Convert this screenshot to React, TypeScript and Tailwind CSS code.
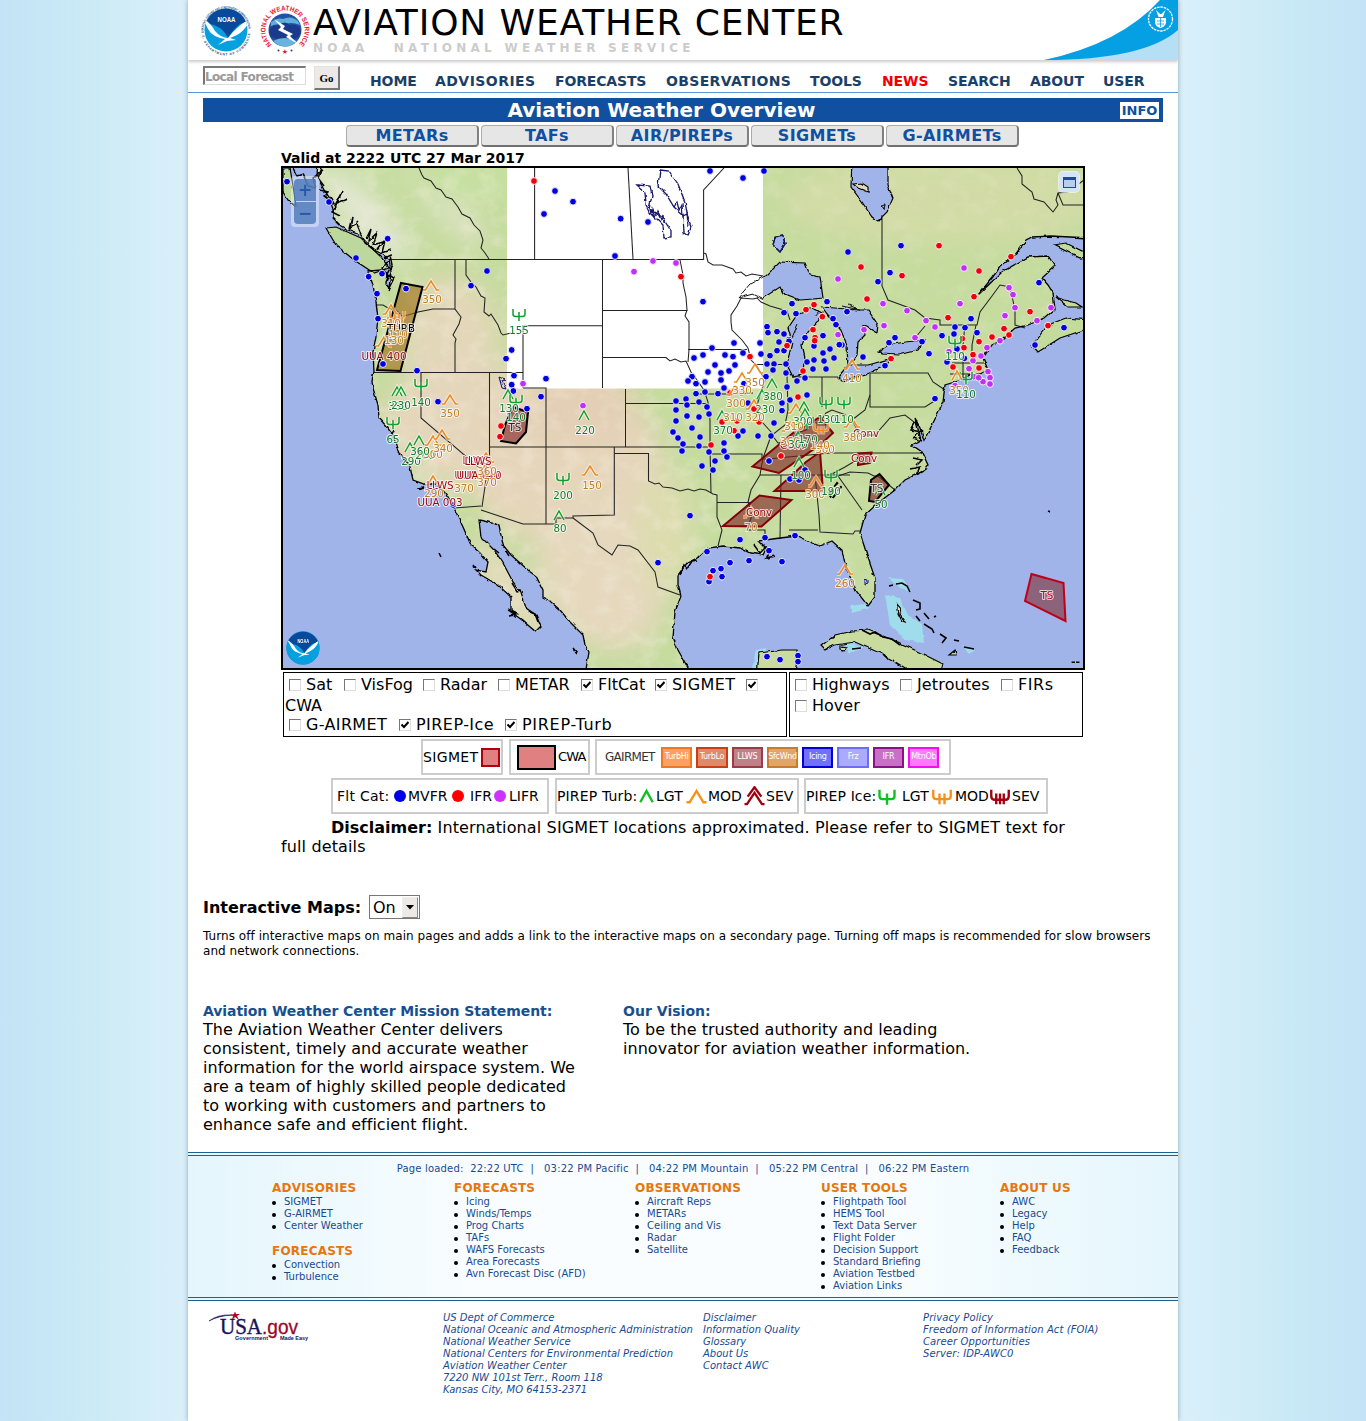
import React from "react";

type Pt = [number, number];
type Tile = { ox: number; oy: number; blue?: string; red?: string; purple?: string };

// Station dots, grouped by map sector; coordinates are thirds of a pixel from the sector origin.
const sectors: Tile[] = [
  {
    ox: 281, oy: 165,
    blue: "18,50 144,111 320,221 225,279 303,326 263,335 375,371 288,386 291,461 306,597 408,617 471,710 618,318 570,362 692,555 675,581 699,632 692,659 697,678 738,731 780,695 795,641",
    red: "759,48",
    purple: "726,656",
  },
  {
    ox: 550, oy: 165,
    blue: "15,78 69,110 -18,147 212,161 294,171 195,273 459,410 480,18 579,39 642,18 726,416 702,443 738,446 651,485 654,503 681,500 702,507 717,524 687,530 765,518",
    red: "393,335 768,434 792,419 789,494 795,518",
    purple: "252,320 309,288 378,294 99,722",
  },
  {
    ox: 815, oy: 165,
    blue: "99,261 258,242 225,323 189,350 36,410 54,461 63,479 24,512 96,440 240,518 222,533 321,530 381,512 342,566 210,602 144,576 81,540 420,486 450,488 468,461 417,507 486,503 426,552 396,591 448,580 360,701 672,353 747,488 660,540",
    red: "138,306 261,332 372,242 588,275 492,318 477,395 156,402 22,455 399,458 228,581 442,521 492,530 447,548 474,569 414,606 492,609 531,516 567,491 582,510 645,440 699,482",
    purple: "69,342 447,309 204,416 276,437 435,416 333,467 360,486 207,482 147,494 69,509 300,518 402,560 462,611 476,635 420,662 474,587 498,573 516,548 555,527 570,452 600,428 594,389 582,368 708,428 666,467 519,620 525,638 504,650 525,657 491,638",
  },
  { ox: 281, oy: 415, blue: "516,270", red: "660,33 657,65" },
  {
    ox: 550, oy: 415,
    blue: "324,443 471,410 570,374 645,368 735,362 657,407 597,437 696,440 540,443 513,461 489,467 516,485 477,500 651,725 690,734 744,722 744,740",
    red: "480,485",
  },
  {
    ox: 660, oy: 340,
    blue: "222,9 300,9 357,6 387,4 156,24 129,45 102,54 195,45 219,50 249,39 303,42 330,47 351,32 372,32 165,75 225,75 321,72 342,72 378,72 144,96 183,99 207,93 339,90 378,99 96,110 84,123 183,120 318,110 108,131 135,126 252,131 381,141 411,123 435,114 441,66 462,60 459,87 492,63 498,87 522,54 489,39 510,27 462,18 538,14 192,144 108,161 135,156 174,161 48,183 78,177 81,195 117,186 141,201 48,210 147,222 48,243 81,228 117,231 96,264 39,276 54,294 69,312 66,333 120,291 117,318 147,336 192,309 192,333 201,351 165,363 126,378 159,390 249,273 234,288 294,288 333,288 342,249 366,189 366,212 390,180 441,165 264,189 327,363 435,390 390,417 417,420 90,527",
    red: "381,17 270,50 464,2 429,93 414,171 210,159 282,207 186,246 231,243 297,246 222,272 153,315 363,348",
  },
];

const parse = (s?: string): Pt[] => (s ? s.split(" ").map((p) => p.split(",").map(Number) as Pt) : []);

function Dots({ t }: { t: Tile }) {
  const draw = (s: string | undefined, fill: string) =>
    parse(s).map(([x, y], i) => (
      <circle key={fill + i} cx={t.ox + x / 3} cy={t.oy + y / 3} r={3.4} fill={fill} stroke="#fff" strokeWidth={0.9} />
    ));
  return (
    <g>
      {draw(t.blue, "#0000e0")}
      {draw(t.purple, "#c030f8")}
      {draw(t.red, "#f00008")}
    </g>
  );
}

const glyphs: Record<string, string> = {
  lgt: "M-5 5L0-4L5 5",
  mod: "M-8 5H-5.500L0-4L5.500 5H8",
  sev: "M-8 6.500H-6L0-2.500L6 6.500H8M-5.500 .5L0-7L5.500 .5",
  ice: "M-6-5V0Q-6 2.500-3.500 2.500H3.500Q6 2.500 6 0V-5M0-2V7",
  icemod: "M-7-5V0Q-7 2.500-4.500 2.500H4.500Q7 2.500 7 0V-5M-2-2V6.500M2-2V6.500",
  icesev: "M-7-5V0Q-7 3-4.500 3H4.500Q7 3 7 0V-5M-3-2V6.500M0-2V6.500M3-2V6.500",
};

function Glyph({ x, y, k, c }: { x: number; y: number; k: string; c: string }) {
  return (
    <g transform={`translate(${x} ${y})`} fill="none">
      <path d={glyphs[k]} stroke="#fff" strokeOpacity={0.6} strokeWidth={3.4} />
      <path d={glyphs[k]} stroke={c} strokeWidth={1.5} />
    </g>
  );
}

const G = "#12a02c";
const O = "#f08820";
const reports: [number, number, string, string][] = [
  [431, 285, "mod", O], [519, 314, "ice", G], [391, 309, "mod", O], [397, 316, "icemod", O], [395, 322, "icemod", O],
  [384, 341, "mod", O], [397, 391, "lgt", G], [401, 391, "lgt", G], [421, 384, "ice", G], [450, 399, "mod", O],
  [393, 422, "ice", G], [410, 447, "lgt", G], [419, 440, "lgt", G], [433, 440, "mod", O], [442, 434, "mod", O],
  [433, 480, "mod", O], [486, 457, "mod", O], [487, 466, "mod", O], [508, 394, "lgt", G], [516, 400, "ice", G],
  [584, 415, "lgt", G], [563, 478, "ice", G], [590, 470, "mod", O], [559, 515, "lgt", G], [755, 368, "mod", O],
  [742, 377, "mod", O], [772, 383, "lgt", G], [762, 394, "lgt", G], [735, 390, "mod", O], [754, 404, "mod", O],
  [722, 415, "lgt", G], [796, 408, "mod", O], [804, 406, "lgt", G], [805, 413, "lgt", G], [826, 402, "ice", G],
  [844, 402, "ice", G], [807, 422, "ice", G], [821, 428, "icemod", O], [790, 426, "mod", O], [798, 436, "lgt", G],
  [852, 364, "mod", O], [852, 422, "mod", O], [799, 462, "lgt", G], [816, 481, "mod", O], [831, 475, "ice", G],
  [880, 490, "lgt", G], [751, 512, "mod", O], [845, 569, "mod", O], [955, 341, "ice", G], [966, 377, "ice", G],
  [957, 375, "lgt", O],
];

const TG = "#147a2c";
const TO = "#c07c22";
const TR = "#9a0010";
const labels: [number, number, string, string][] = [
  [432, 303, "350", TO], [519, 334, "155", TG], [391, 327, "310", TO], [401, 332, "TURB", "#000"], [398, 338, "110", TO],
  [394, 344, "130", TO], [384, 360, "UUA 400", TR], [398, 410, "330", TG], [401, 409, "230", TG], [421, 406, "140", TG],
  [450, 417, "350", TO], [393, 443, "65", TG], [411, 465, "290", TG], [425, 459, "200", TG], [433, 458, "300", TO],
  [420, 455, "360", TG], [443, 452, "340", TO], [476, 464, "LLWS", TR], [478, 465, "LLWS", TR], [477, 479, "UUA 040", TR],
  [479, 479, "UUA 010", TR], [487, 475, "360", TO], [487, 486, "370", TO], [464, 492, "370", TO], [440, 489, "LLWS", TR],
  [434, 497, "290", TO], [440, 506, "UUA 003", TR], [509, 412, "130", TG], [516, 421, "140", TG], [515, 431, "TS", "#222"],
  [585, 434, "220", TG], [563, 499, "200", TG], [592, 489, "150", TO], [560, 532, "80", TG], [755, 386, "350", TO],
  [742, 394, "330", TO], [773, 400, "380", TG], [736, 407, "300", TO], [765, 413, "230", TG], [733, 421, "310", TO],
  [755, 421, "320", TO], [723, 434, "370", TG], [803, 425, "300", TG], [794, 430, "310", TO], [827, 423, "130", TG],
  [844, 423, "110", TG], [852, 382, "410", TO], [866, 437, "Conv", TR], [853, 441, "380", TO], [864, 462, "Conv", TR],
  [793, 449, "Conv", TR], [825, 453, "300", TO], [790, 445, "360", TO], [798, 448, "300", TG], [808, 443, "170", TG],
  [820, 449, "140", TO], [801, 479, "100", TG], [815, 498, "300", TO], [831, 495, "190", TG], [877, 492, "TS", "#333"],
  [881, 508, "50", TG], [759, 516, "Conv", TR], [751, 531, "70", TO], [845, 587, "260", TO], [955, 360, "110", TG],
  [959, 394, "350", TO], [966, 398, "110", TG], [1047, 599, "TS", "#c00018"],
];

const mainland =
  "318,160 317,176 324,190 329,197 333,208 333,218 341,226 348,230 361,235 365,243 374,250 382,254 389,259 391,272 389,288 386,284 387,273 381,270 368,271 373,285 376,302 378,318 376,336 373,352 374,372 372,380 373,388 378,405 379,418 386,426 393,435 398,452 404,458 410,467 413,480 424,484 437,484 445,493 454,508 463,527 471,545 480,553 488,562 486,572 476,570 481,575 498,585 511,597 511,612 522,620 536,632 541,627 536,615 526,608 521,592 513,582 503,563 494,550 481,537 479,520 484,521 499,525 503,545 511,555 528,570 536,576 543,590 543,598 551,602 560,610 570,622 583,635 585,645 589,652 585,675 694,675 688,668 678,650 673,637 675,612 681,596 678,585 678,575 687,563 697,558 708,548 723,546 740,548 750,553 763,555 766,549 758,541 780,538 797,536 812,543 820,546 832,541 842,550 846,568 857,592 868,606 875,597 875,578 867,555 860,533 865,515 878,503 895,490 905,480 925,470 928,465 922,452 912,445 921,440 915,418 920,428 924,440 932,425 937,415 943,402 945,385 958,381 970,375 980,374 988,370 983,358 992,345 1002,340 1015,328 1028,325 1045,318 1055,309 1053,293 1048,285 1042,278 1055,266 1048,256 1028,257 1002,272 978,295 992,278 1000,267 1015,255 1026,240 1032,237 1050,236 1090,238 1090,160";

const water: string[] = [
  "852,160 851,187 862,202 872,217 878,221 887,212 893,198 888,185 888,160",
  "738,298 750,282 767,275 780,262 805,263 810,275 820,277 823,298 813,299 800,300 783,293 780,287 763,298 753,297",
  "813,308 797,315 788,328 792,342 787,365 793,377 802,375 805,358 802,345 807,332 817,322 822,313",
  "822,307 835,308 858,310 868,310 878,325 877,333 863,325 865,335 858,342 857,355 848,368 847,345 840,328 828,315",
  "838,377 848,365 868,365 890,359 887,365 865,375 842,381",
  "878,352 888,345 905,342 925,340 918,350 898,355 882,354",
  "773,245 775,237 783,236 785,244 780,252",
];

const borders: string[] = [
  "389,259.500 703.600,259.500 703.600,190 724,168", "534.600,168 534.600,259", "628,168 633,259",
  "419,168 422,175 424,178 431,181 436,188 441,190 446,197 452,199 458,207 462,214 470,218 474,225 480,231 483,240 481,248 485,253 489,259",
  "455,259 455,309 461,317 459,324 453,335 456,339 455,343 455,372", "376,305 383,305 388,308 396,310 402,316 408,315 418,312 433,309 455,309", "374,372.500 523,372.500",
  "466,260 466,275 471,282 476,287 481,296 485,298 484,312 489,316 491,314 498,325 501,333 503,335 511,333", "523,388 523,325.700 602.500,325.700", "523,388 546,388 546,524",
  "602.500,260 602.500,388", "602.500,310.500 687.500,310.500", "602.500,357.500 666,357.500 670,361 675,359 681,362 686,361 691,372 697,380 704,390 708,402 710,420 710,447 711,493",
  "680,260 683,275 683,283 686,297 687,310 685,316 689,322 689,350 688,362", "688,349.500 747,349.500",
  "703.600,253 706,254 708,262 713,265 722,265 733,269 736,273 741,272 746,276 752,274 763,276", "753,299 741,298 737,306 731,315 731,322 732,330 742,340 748,348 751,360 757,366 765,380 760,395 757,405 760,419 763,423 772,433 766,450 763,458 760,475 751,490 748,502 752,515 747,530",
  "753,299 757,298 761,302 770,306 787,311 790,320", "755,364.500 788,364.500", "696,394 728,394 753,393", "625.500,389 625.500,447", "625.500,403.500 708,403.500",
  "421,372 421,418 482,470 486,480 483,500 482,507", "489.500,372 489.500,455 485,473", "489.500,447 710,447", "614.300,447 614.300,515 573,516 573,518 556,518 556,524 523,524 481,510",
  "454,508 481,506", "614.300,453.500 648.500,453.500 648.500,481 655,484 659,483 663,487 672,488 680,491 688,489 694,491 700,489 706,490 713,494 717,495 717,517 722,530 718,546",
  "573,518 593,533 598,545 612,555 618,545 630,546 638,550 655,572 658,587 680,595",
  "710,454 762,454 762,459 768,459", "717,502.500 750,502.500", "760,475 850,475", "781,475 780,538", "815,475 819,515 820,532 853,534 855,531 860,531", "789,530 818,530",
  "787,375 788,410 785,425 772,435 778,443 790,441 797,433 806,430 812,424 820,422 826,413 832,410 846,415", "822,377 822,407", "792,377 838,377", "768,459 830,453 922,453",
  "870,373 870,407 925,407 936,400", "870,373 928,373 933,382 945,390", "870,395 865,410 852,420 860,435 875,435 890,418 905,415 918,425", "830,475 845,467 860,458", "838,476 850,472 868,473 874,476 878,476 895,490", "838,476 850,493 862,510",
  "882,215 882,286 888,300 915,310 925,318 940,320 940,325 977,325 980,312 992,296 1000,285 1010,287 1015,310 1015,325 1025,328", "925,326 915,338",
  "965,325 963,345 963,380", "976,325 972,345 972,362", "952,363 984,363", "950,374 970,374", "748,530 765,530 765,535",
  "1017,168 1022,176 1022,184 1032,192 1034,199 1044,202 1053,212 1058,205 1056,200 1058,193 1068,192 1084,180", "1058,193 1063,205 1084,205",
];

const lakes =
  "M660 170L669 171L678 184L685 202L688 218L691 226L688 236L684 233L683 215L674 207L666 194L658 186ZM637 185L650 186L652 196L649 209L662 217L671 231L671 237L664 238L663 225L652 214L646 204L645 192ZM773 245L775 238L783 236L785 244L780 252Z";

const fjords =
  "M293 168l4 8l6-2l5 12l8 2l-3-10l10-8M322 168l-4 10l6 8M320 190l8 2l-4 4l10 8M335 205l8-14l-6 12l10-4M330 197l6 10l-4 5l8 4M349 229l3-12l-2 12l8-8M361 234l-4-10M366 239l5-10l-3 12l9-8l-4 12l10-3M377 250l8-10l-3 13l9-3M384 258l6-3l2 10l-5 9l7 4l-6 12M388 262l-6 6l6 8l-3 6M917 420l-6 10l10 2l-8 6l9 3M913 458l9 2l-6 6M910 469l10-2l-4 8l8-4M680 575l4-10l3 4l5-8l6-1M754 545l6 8l5-5l7 2l-6 8l9-2M512 583l5 8l4-1M530 612l5 2l3 8M508 610l8 4l-6 1M416 488l8-1l-6 2M439 553l2 4M474 565l2 3M1047 511l3 1M573 648l4 5M494 549l5 4M506 551l3 5M395 430l-2 4";

function NoaaSeal({ size, ring = true }: { size: number; ring?: boolean }) {
  const clip = ring ? "sealClipRing" : "sealClipPlain";
  return (
    <svg className="block" width={size} height={size} viewBox="0 0 52 52">
      <defs>
        <path id="ringTop" d="M3.500 27A22.500 22.500 0 0 1 48.500 27" />
        <path id="ringLow" d="M1.500 27A24.500 24.500 0 0 0 50.500 27" />
        <clipPath id={clip}><circle cx="26" cy="26" r={ring ? 21.5 : 25} /></clipPath>
      </defs>
      <circle cx="26" cy="26" r="25.500" fill={ring ? "#fff" : "#0b92d0"} />
      {ring && (
        <g fontFamily="Liberation Sans" fontSize="3.200" fontWeight="bold" fill="#1a4a86">
          <text><textPath href="#ringTop" textLength="68" lengthAdjust="spacingAndGlyphs">NATIONAL OCEANIC AND ATMOSPHERIC ADMINISTRATION</textPath></text>
          <text><textPath href="#ringLow" textLength="74">U.S. DEPARTMENT OF COMMERCE</textPath></text>
        </g>
      )}
      <g clipPath={`url(#${clip})`}>
        <path d="M0 0H52V52H0Z" fill="#05a0e0" />
        <path d="M0 0H52V16L40 20Q32 27 28 34Q22 22 10 20L0 14Z" fill="#08499a" />
        <path d="M1 13Q10 18 15 27Q21 34 28 34Q36 23 51 14Q46 26 37 31L30 34L36 36L27 37L18 41L25 35Q12 33 8 25Q5 18 1 13Z" fill="#fff" />
      </g>
      <text x="26.500" y="18" textAnchor="middle" fontFamily="Liberation Sans" fontSize="7.500" fontWeight="bold" fill="#fff" textLength="18" lengthAdjust="spacingAndGlyphs">NOAA</text>
    </svg>
  );
}

function NwsSeal() {
  return (
    <svg className="block" width="50" height="50" viewBox="0 0 50 50">
      <defs>
        <path id="nwsTop" d="M11.900 39.600A19.600 19.600 0 1 1 38.100 39.600" />
      </defs>
      <text fontFamily="Liberation Sans" fontSize="6.800" fontWeight="bold" fill="#e8152a">
        <textPath href="#nwsTop" textLength="93" lengthAdjust="spacingAndGlyphs">NATIONAL WEATHER SERVICE</textPath>
      </text>
      <circle cx="25" cy="25" r="16.500" fill="#2352a4" />
      <path d="M11 17Q18 12 23 14Q31 10 38 16L40 20Q30 16 24 20Q16 18 11 21Z" fill="#5fb0d8" />
      <path d="M9 27Q10 20 18 20Q25 15 30 20Q39 18 41 26Q40 33 33 34Q24 38 18 34Q10 34 9 27Z" fill="#1c3a8c" />
      <path d="M13 36Q24 30 37 36Q31 42 25 41.500Q18 41 13 36Z" fill="#68b4dc" />
      <path d="M14 14L25 21L23 24L33 29L30 31L38 39L26 32L28 30L18 25L21 22Z" fill="#fff" />
      <text x="25" y="49" textAnchor="middle" fontFamily="DejaVu Sans" fontSize="7" fill="#e8152a">★</text>
      <circle cx="18.500" cy="45.500" r="1" fill="#24408c" />
      <circle cx="31.500" cy="45.500" r="1" fill="#24408c" />
    </svg>
  );
}

function Swoosh() {
  return (
    <svg className="h-[60px] w-[134px]" viewBox="0 0 134 60">
      <path d="M0 60Q76 44 116 0H134V60Z" fill="#b4dff5" />
      <path d="M0 60Q76 44 116 0H134V30Q100 60 0 60Z" fill="#05a0e4" />
      <circle cx="116.500" cy="19" r="12" fill="none" stroke="#fff" strokeWidth="1.300" strokeDasharray="2.500 .8" />
      <path d="M112 10l4 4h1.500l4-4l-2.500 7h-4.500zM111 18h11v5q-1 4-5.500 5q-4.500-1-5.500-5z" fill="#fff" />
      <path d="M113 21h7M113 24h7M116.500 18v9" stroke="#05a0e4" strokeWidth=".8" />
    </svg>
  );
}

function WeatherMap() {
  return (
    <div className="relative h-[504px] w-[804px] overflow-hidden border-2 border-black">
      <svg className="block h-[500px] w-[800px]" viewBox="283 168 800 500">
        <defs>
          <filter id="coast" x="-5%" y="-5%" width="110%" height="110%">
            <feTurbulence type="fractalNoise" baseFrequency=".14" numOctaves="2" seed="4" result="n" />
            <feDisplacementMap in="SourceGraphic" in2="n" scale="3.500" xChannelSelector="R" yChannelSelector="G" />
          </filter>
          <filter id="soft" x="-40%" y="-40%" width="180%" height="180%"><feGaussianBlur stdDeviation="13" /></filter>
          <filter id="relief" x="0" y="0" width="100%" height="100%">
            <feTurbulence type="fractalNoise" baseFrequency=".05 .06" numOctaves="5" seed="9" />
            <feColorMatrix values="0 0 0 0 .96  0 0 0 0 .88  0 0 0 0 .8  0 3 0 0 -1.350" />
          </filter>
          <clipPath id="landClip"><polygon points={mainland} /></clipPath>
        </defs>
        <rect x="283" y="168" width="800" height="500" fill="#a0b4ea" />
        <g filter="url(#coast)">
          <polygon points={mainland} fill="#c5dc9e" />
        </g>
        <g clipPath="url(#landClip)">
          <g filter="url(#soft)">
            <ellipse cx="450" cy="340" rx="50" ry="65" fill="#e2d7b8" />
            <ellipse cx="470" cy="425" rx="90" ry="62" fill="#e4d6bb" />
            <ellipse cx="565" cy="465" rx="100" ry="80" fill="#e5d5ba" />
            <ellipse cx="580" cy="405" rx="60" ry="40" fill="#e3cfb5" />
            <ellipse cx="600" cy="575" rx="60" ry="80" fill="#e5d8bd" transform="rotate(-28 600 575)" />
            <ellipse cx="665" cy="530" rx="30" ry="60" fill="#dcdcae" />
            <ellipse cx="510" cy="590" rx="16" ry="60" fill="#e9dcc2" transform="rotate(-38 510 590)" />
            <ellipse cx="365" cy="215" rx="18" ry="65" fill="#e4e8d6" transform="rotate(-42 365 215)" />
            <ellipse cx="445" cy="205" rx="14" ry="60" fill="#dde2c4" transform="rotate(-45 445 205)" />
            <ellipse cx="940" cy="200" rx="160" ry="45" fill="#d2dba6" />
            <ellipse cx="470" cy="180" rx="60" ry="20" fill="#c6e0a0" />
          </g>
          <rect x="283" y="168" width="480" height="500" filter="url(#relief)" opacity=".28" />
          <rect x="763" y="168" width="320" height="500" filter="url(#relief)" opacity=".14" />
        </g>
        <g filter="url(#coast)" stroke="#000" strokeWidth="1.200">
          {water.map((w) => <polygon key={w} points={w} fill="#a0b4ea" />)}
          <polygon points="326,228 336,227 361,238 381,257 389,268 374,273 354,260 336,245" fill="#bcd89c" />
          <polygon points="283,168 290,168 293,186 296,206 288,200 283,192" fill="#bcd89c" />
          <polygon points="1048,325 1032,345 1038,352 1060,338 1090,328 1090,320 1066,318" fill="#c3dc9c" />
          <polygon points="1054,245 1066,243 1090,255 1080,258" fill="#c3dc9c" />
          <polygon points="1056,297 1064,300 1076,303 1082,307 1068,307" fill="#c3dc9c" />
          <polygon points="853,184 862,183 868,187 868,192 858,188" fill="#e4dcb8" />
        </g>
        <g fill="#9ee0ec" fillOpacity=".9" filter="url(#coast)">
          <path d="M888 578L903 579L912 592L900 588ZM885 595L900 598L908 615L922 625L924 643L905 640L890 625ZM842 640L864 647L850 654ZM850 606L865 604L870 608L852 613ZM962 645L975 650L970 654Z" />
          <path d="M752 668L756 650L766 648L764 668Z" />
        </g>
        <g filter="url(#coast)" stroke="#000" strokeWidth="1.200" fill="#c9db9f">
          <path d="M821 646L835 635L852 631L868 630L898 642L925 655L943 664L940 675L912 672L882 654L855 642L835 645L825 650Z" />
          <path d="M757 675L759 653L783 650L797 650L798 662L795 675Z" />
          <path d="M897 604l4 5l-1 5l5 8l-3-1l-5-10z" fill="#eadfb4" />
          <path d="M840 646l6 1l-2 4l-4-1zM949 655l6-5l1 5z" />
        </g>
        <path d="M889 586l4-1M896 584l6-1l5 3l3 6M913 600l7 3v6l-4 1M916 616l4 5M924 624l8 5l2 4M924 613l5 6M934 617l2-1M940 634l6 4l-4 5M964 647l10 2M954 640l5 1M883 654l5 5M852 649l9-1M862 630l8 4l5-2l8 5l9 2l8 6" fill="none" stroke="#000" strokeWidth="1.600" />
        <rect x="507" y="168" width="256" height="220.500" fill="#fff" />
        <g fill="none" stroke="#222" strokeWidth="1.050">
          {borders.map((b) => <polyline key={b} points={b} />)}
        </g>
        <g fill="none" filter="url(#coast)">
          <polygon points={mainland} stroke="#000" strokeWidth="1.300" />
          <path d={fjords} stroke="#000" strokeWidth="1.500" />
          <path d={lakes} stroke="#14146a" strokeWidth="1.300" />
          <path d="M646 208l4 7l2-6l3 8l2-6l4 9l2-5l1 8M674 207l3-5l2 8l3-6l1 12l4-2l1 12" stroke="#14146a" strokeWidth="1.200" />
          <path d="M738 298L750 284L763 277M738 298L753 294L763 299" stroke="#111" />
          <path d="M499 377l7 3l-4 1l4 8l-4-1z" stroke="#14146a" />
          <path d="M865 579l3 1v4l-3 1z" stroke="#14146a" fill="#a0b4ea" />
          <path d="M880 206l5-1l-1 4zM815 316l4-5M790 342l8-18M848 305l8 3l-4 2M842 306l18 4" stroke="#111" />
        </g>
        <g fill="#7e2020" fillOpacity=".62" strokeWidth="2">
          <polygon points="401,283 422.500,287 400.500,371 377,370" fill="#9c6c14" stroke="#000" />
          <polygon points="501,441 516,443.500 526,432 528,412 513,407 505,425" stroke="#000" />
          <g stroke="#850008">
            <polygon points="752.500,466.500 793,433 820,417 833,433 820,445 779,473" />
            <polygon points="774.500,491 790,477 806,462 820,452 823,491" />
            <polygon points="723,526 759.500,495.500 791.500,500 761.500,526.500" />
            <polygon points="858,453.500 871.500,452.500 870,463 858,465" />
          </g>
          <polygon points="871,480 879.500,474 889,485 875,502 869,501" stroke="#000" />
          <polygon points="829,494 837,483 841,487 832,499" stroke="#000" fill="none" strokeDasharray="6 3" />
          <polygon points="1031.500,574 1063.500,583 1065.500,621 1025,601" stroke="#c00018" fillOpacity=".55" />
        </g>
        {sectors.map((t, i) => <Dots key={i} t={t} />)}
        {reports.map(([x, y, k, c], i) => <Glyph key={i} x={x} y={y} k={k} c={c} />)}
        <g fontFamily="DejaVu Sans" fontSize="10.300" textAnchor="middle" stroke="#fff" strokeWidth="2" strokeOpacity=".75" paintOrder="stroke" strokeLinejoin="round">
          {labels.map(([x, y, s, c], i) => <text key={i} x={x} y={y} fill={c}>{s}</text>)}
        </g>
        <text x="1071" y="665" fontFamily="DejaVu Sans" fontSize="11" fontWeight="bold" textLength="9">--</text>
      </svg>
      <div className="absolute left-[8px] top-[8px] flex w-[28px] flex-col gap-px rounded bg-white/40 p-[3px] text-center text-[17px] font-bold leading-[22px] text-[#2858a8]">
        <span className="h-[22px] rounded-t bg-[#4a78b8]/80">+</span>
        <span className="h-[22px] rounded-b bg-[#4a78b8]/80">−</span>
      </div>
      <div className="absolute right-[4px] top-[4px] flex size-[20px] items-center justify-center rounded bg-[#d4e3f8] ring-1 ring-white/60">
        <span className="h-[11px] w-[13px] border border-t-[3px] border-[#1c4a94] bg-[#b9cdec]" />
      </div>
      <div className="absolute bottom-[3px] left-[3px] size-[34px]"><NoaaSeal size={34} ring={false} /></div>
    </div>
  );
}

function Box({ on }: { on?: boolean }) {
  return (
    <span className="mt-px flex size-[12px] shrink-0 items-center justify-center border border-b-[#ddd] border-l-[#777] border-r-[#ddd] border-t-[#777] bg-white">
      {on && (
        <svg width="8" height="8" viewBox="0 0 8 8"><path d="M.5 3.500L3 6L7.500 1" fill="none" stroke="#000" strokeWidth="2" /></svg>
      )}
    </span>
  );
}

function Check({ label, on, w }: { label: string; on?: boolean; w: string }) {
  return (
    <label className={`flex items-center gap-[5px] ${w}`}>
      <Box on={on} />
      <span>{label}</span>
    </label>
  );
}

const nav: [string, string][] = [
  ["HOME", "w-[65px] tracking-[-0.100px]"], ["ADVISORIES", "w-[120px] tracking-[0.450px]"], ["FORECASTS", "w-[111px] tracking-[-0.150px]"],
  ["OBSERVATIONS", "w-[144px] tracking-[0.350px]"], ["TOOLS", "w-[72px]"], ["NEWS", "w-[66px] text-[#f00000]"],
  ["SEARCH", "w-[82px]"], ["ABOUT", "w-[73px]"], ["USER", "w-[50px]"],
];

const gair: [string, string][] = [
  ["TurbHi", "border-[#f07820] bg-[#fba060]"], ["TurbLo", "border-[#c84010] bg-[#e08868]"], ["LLWS", "border-[#9c3a48] bg-[#c08088]"],
  ["SfcWnd", "border-[#cc7a28] bg-[#dfa668]"], ["Icing", "border-[#0000d8] bg-[#7070ff]"], ["Frz", "border-[#6c6cf4] bg-[#aaaaff]"],
  ["IFR", "border-[#8c108c] bg-[#c870c8]"], ["MtnOb", "border-[#f010f0] bg-[#ff78ff]"],
];

function FootList({ title, items }: { title: string; items: string[] }) {
  return (
    <div>
      <h4 className="h-[15px] text-[12px] font-bold leading-[14px] tracking-[0.200px] text-[#e8760c]">{title}</h4>
      <ul>
        {items.map((i) => (
          <li key={i} className="flex h-[12px] items-center gap-[8px] whitespace-nowrap">
            <span className="mt-px size-[4px] rounded-full bg-black" />
            <span>{i}</span>
          </li>
        ))}
      </ul>
    </div>
  );
}

function LegendIcon({ k, c, w = 20 }: { k: string; c: string; w?: number }) {
  return (
    <svg className="shrink-0" width={w} height="20" viewBox={`${-w * 0.4} -8 ${w * 0.8} 16`}>
      <path d={glyphs[k]} fill="none" stroke={c} strokeWidth="1.900" />
    </svg>
  );
}

export default function App() {
  return (
    <div className="h-[1421px] bg-[linear-gradient(to_right,#c4e3f6_0px,#c8e8f6_60px,#cdebf6_100px,#daf0fb_188px,#daf0fb_1178px,#cdebf6_1266px,#c8e8f6_1306px,#c4e3f6_1366px)] font-['DejaVu_Sans',sans-serif] text-black">
      <div className="mx-auto flex h-full w-[990px] flex-col bg-white shadow-[0_0_5px_#8ba9b8]">
        <header className="flex h-[60px] shrink-0 justify-between shadow-[0_2px_3px_#ccc]">
          <div className="flex">
            <div className="ml-[12px] mt-[4px]"><NoaaSeal size={52} /></div>
            <div className="ml-[8px] mt-[5px]"><NwsSeal /></div>
            <div className="ml-[3px] whitespace-nowrap">
              <h1 className="mt-[2px] h-[38px] text-[36px] leading-[42px] tracking-[0.860px]">AVIATION WEATHER CENTER</h1>
              <p className="pt-px text-[12px] font-bold leading-[15px] tracking-[4.250px] text-[#ccc]">NOAA&nbsp; &nbsp;NATIONAL WEATHER SERVICE</p>
            </div>
          </div>
          <Swoosh />
        </header>
        <div className="flex h-[33px] shrink-0 border-b border-[#5c96d2] pl-[15px] pt-[6px]">
          <div className="h-[19px] w-[103px] border border-b-[#ddd] border-l-2 border-r-[#ddd] border-t-2 border-[#777] text-[12px] font-bold leading-[18px] tracking-[-0.650px] text-[#999]">Local Forecast</div>
          <button className="ml-[8px] h-[24px] w-[26px] border border-b-2 border-r-2 border-[#e4e0dc] border-b-[#777] border-r-[#777] bg-[#ece9e6] font-['Liberation_Serif'] text-[11px] font-bold leading-[20px]">Go</button>
          <nav className="ml-[30px] flex pt-[6px] text-[14px] font-bold leading-[18px] tracking-[-0.100px] text-[#1a4068]">
            {nav.map(([n, c]) => <a key={n} className={c}>{n}</a>)}
          </nav>
        </div>
        <div className="mx-[15px] mt-[5px] flex h-[24px] shrink-0 items-center bg-[#114fa0] pr-[4px] text-white">
          <h2 className="flex-1 text-center text-[20px] font-bold leading-[24px] tracking-[0.020px]">Aviation Weather Overview</h2>
          <a className="h-[17px] w-[39px] bg-white text-center text-[13px] font-bold leading-[17px] text-[#114fa0]">INFO</a>
        </div>
        <div className="ml-[158px] mt-[3px] flex h-[22px] shrink-0 gap-[2px]">
          {["METARs", "TAFs", "AIR/PIREPs", "SIGMETs", "G-AIRMETs"].map((t) => (
            <button key={t} className="h-[22px] w-[133px] rounded border border-b-2 border-r-2 border-[#aaa] border-b-[#707070] border-r-[#808080] bg-[#e6e6e6] text-[16px] font-bold leading-[20px] tracking-[0.400px] text-[#114fa0]">{t}</button>
          ))}
        </div>
        <main className="ml-[93px] w-[804px] shrink-0">
          <p className="h-[19px] pt-[2px] text-[14px] font-bold leading-[18px] tracking-[0.010px]">Valid at 2222 UTC 27 Mar 2017</p>
          <WeatherMap />
          <div className="ml-[2px] mt-[2px] flex h-[65px] gap-[2px] text-[16px]">
            <div className="w-[504px] border border-black pt-px">
              <div className="ml-[5px] flex h-[21px] whitespace-nowrap">
                <Check label="Sat" w="w-[55px]" /><Check label="VisFog" w="w-[79px]" /><Check label="Radar" w="w-[75px]" />
                <Check label="METAR" w="w-[83px]" /><Check label="FltCat" on w="w-[74px]" /><Check label="SIGMET" on w="w-[91px] tracking-[0.400px]" /><Check label="" on w="w-[12px]" />
              </div>
              <p className="ml-px h-[20px] leading-[21px]">CWA</p>
              <div className="ml-[5px] flex h-[19px] whitespace-nowrap">
                <Check label="G-AIRMET" w="w-[110px] tracking-[0.350px]" /><Check label="PIREP-Ice" on w="w-[106px] tracking-[0.450px]" /><Check label="PIREP-Turb" on w="w-[120px] tracking-[0.700px]" />
              </div>
            </div>
            <div className="w-[294px] border border-black pl-[5px] pt-px">
              <div className="flex h-[21px] whitespace-nowrap">
                <Check label="Highways" w="w-[105px]" /><Check label="Jetroutes" w="w-[101px] tracking-[0.150px]" /><Check label="FIRs" w="w-[60px] tracking-[0.600px]" />
              </div>
              <div className="flex h-[21px]"><Check label="Hover" w="w-[100px]" /></div>
            </div>
          </div>
          <div className="ml-[140px] mt-[2px] flex h-[36px]">
            <div className="flex w-[82px] items-center border-2 border-[#ccc] text-[14px]">
              <span className="w-[58px] tracking-[0.350px]">SIGMET</span><span className="size-[19px] border-2 border-[#b00010] bg-[#e08080]" />
            </div>
            <div className="ml-[6px] flex w-[81px] items-center gap-[2px] border-2 border-[#ccc] pl-[6px] text-[13px] tracking-[-0.900px]">
              <span className="h-[25px] w-[39px] border-2 border-black bg-[#e08080]" />CWA
            </div>
            <div className="ml-[5px] flex w-[356px] items-center gap-[4px] border-2 border-[#ccc] pl-[8px]">
              <span className="w-[52px] text-[12px] tracking-[-0.700px] text-[#333]">GAIRMET</span>
              {gair.map(([n, c]) => (
                <span key={n} className={`flex h-[21px] w-[31.300px] items-center justify-center border-2 text-[8px] tracking-[-0.300px] text-white ${c}`}>{n}</span>
              ))}
            </div>
          </div>
          <div className="ml-[50px] mt-[3px] flex h-[36px] whitespace-nowrap text-[14px]">
            <div className="flex w-[218px] items-center border-2 border-[#ccc] pl-[4px]">
              <span className="w-[57px] tracking-[0.250px]">Flt Cat:</span><span className="size-[12px] rounded-full bg-[#0000e8]" /><span className="ml-[2px] w-[44px]">MVFR</span>
              <span className="size-[12px] rounded-full bg-[#f00]" /><span className="ml-[6px] w-[24px]">IFR</span>
              <span className="size-[12px] rounded-full bg-[#cc33ff]" /><span className="ml-[3px]">LIFR</span>
            </div>
            <div className="ml-[6px] flex w-[244px] items-center border-2 border-[#ccc]">
              <span className="w-[81px] tracking-[0.150px]">PIREP Turb:</span><LegendIcon k="lgt" c="#10c020" w={17} /><span className="ml-px w-[30px]">LGT</span>
              <LegendIcon k="mod" c="#f89018" w={21} /><span className="ml-px w-[36px]">MOD</span><LegendIcon k="sev" c="#a00010" w={21} /><span className="ml-px">SEV</span>
            </div>
            <div className="ml-[5px] flex w-[244px] items-center border-2 border-[#ccc]">
              <span className="w-[71px] tracking-[0.100px]">PIREP Ice:</span><LegendIcon k="ice" c="#10c020" /><span className="ml-[5px] w-[30px]">LGT</span>
              <LegendIcon k="icemod" c="#f89018" /><span className="ml-[3px] w-[35px]">MOD</span><LegendIcon k="icesev" c="#a00010" /><span className="ml-[2px]">SEV</span>
            </div>
          </div>
          <p className="mt-[4px] h-[38px] indent-[50px] text-[16px] leading-[19px] tracking-[0.130px]"><b className="tracking-normal">Disclaimer:</b> International SIGMET locations approximated. Please refer to SIGMET text for full details</p>
        </main>
        <section className="ml-[15px] mt-[39px] shrink-0">
          <div className="flex h-[24px] items-center">
            <b className="w-[166px] pt-[2px] text-[16px]">Interactive Maps:</b>
            <span className="flex h-[24px] w-[51px] items-center justify-between border border-[#777] pl-[3px] pr-px text-[16px]">
              <span className="pt-[2px]">On</span>
              <span className="flex h-[21px] w-[16px] items-center justify-center border border-b-[#888] border-l-[#eee] border-r-[#888] border-t-[#eee] bg-[#ece9e6]">
                <svg width="8" height="5"><path d="M0 0H8L4 4.500Z" /></svg>
              </span>
            </span>
          </div>
          <p className="mt-[10px] w-[960px] text-[12px] leading-[15px] tracking-[0.055px]">Turns off interactive maps on main pages and adds a link to the interactive maps on a secondary page. Turning off maps is recommended for slow browsers<br />and network connections.</p>
        </section>
        <section className="ml-[15px] mt-[42px] flex h-[151px] shrink-0 whitespace-nowrap text-[16px] leading-[19px] tracking-[0.030px]">
          <div className="w-[420px]">
            <h3 className="relative top-px text-[14px] font-bold tracking-[-0.080px] text-[#17508f]">Aviation Weather Center Mission Statement:</h3>
            <p>The Aviation Weather Center delivers<br />consistent, timely and accurate weather<br />information for the world airspace system. We<br />are a team of highly skilled people dedicated<br />to working with customers and partners to<br />enhance safe and efficient flight.</p>
          </div>
          <div>
            <h3 className="relative top-px text-[14px] font-bold text-[#17508f]">Our Vision:</h3>
            <p>To be the trusted authority and leading<br />innovator for aviation weather information.</p>
          </div>
        </section>
        <section className="h-[149px] shrink-0 border-y-4 border-double border-[#1c628f] bg-[linear-gradient(to_right,#e4f6fc,#f9fdff_30%,#f9fdff_70%,#e4f6fc)] pt-[5px] text-[10px] leading-[12px] text-[#174a92]">
          <p className="h-[20px] whitespace-pre text-center leading-[15px] tracking-[0.185px]">{"Page loaded:  22:22 UTC  |   03:22 PM Pacific  |   04:22 PM Mountain  |   05:22 PM Central  |   06:22 PM Eastern"}</p>
          <div className="ml-[82px] flex">
            <div className="w-[182px] pl-[2px]">
              <FootList title="ADVISORIES" items={["SIGMET", "G-AIRMET", "Center Weather"]} />
              <div className="h-[12px]" />
              <FootList title="FORECASTS" items={["Convection", "Turbulence"]} />
            </div>
            <div className="w-[181px] pl-[2px]"><FootList title="FORECASTS" items={["Icing", "Winds/Temps", "Prog Charts", "TAFs", "WAFS Forecasts", "Area Forecasts", "Avn Forecast Disc (AFD)"]} /></div>
            <div className="w-[186px] pl-[2px]"><FootList title="OBSERVATIONS" items={["Aircraft Reps", "METARs", "Ceiling and Vis", "Radar", "Satellite"]} /></div>
            <div className="w-[179px] pl-[2px]"><FootList title="USER TOOLS" items={["Flightpath Tool", "HEMS Tool", "Text Data Server", "Flight Folder", "Decision Support", "Standard Briefing", "Aviation Testbed", "Aviation Links"]} /></div>
            <div className="pl-[2px]"><FootList title="ABOUT US" items={["AWC", "Legacy", "Help", "FAQ", "Feedback"]} /></div>
          </div>
        </section>
        <footer className="flex pl-[20px] pt-[11px] text-[10px] italic leading-[12px] text-[#174a92]">
          <div className="w-[235px]">
            <svg width="102" height="32" viewBox="0 0 102 32">
              <path d="M1 9Q10 2 24 3Q10 4 1 9Z" fill="#181458" stroke="#181458" strokeWidth=".6" />
              <path d="M27-1l1 3l4 0l-3 2l2 4l-4-3l-3 3l1-4l-3-1l4-1z" fill="#b00828" />
              <text x="12" y="22" fontFamily="Liberation Serif" fontStyle="normal" fontSize="23" fill="#181458" stroke="#181458" strokeWidth=".4" textLength="42" lengthAdjust="spacingAndGlyphs">USA</text>
              <text x="54" y="22" fontFamily="Liberation Sans" fontStyle="normal" fontSize="20" fill="#980828" stroke="#980828" strokeWidth=".3" textLength="36" lengthAdjust="spacingAndGlyphs">.gov</text>
              <text x="27" y="28" fontFamily="Liberation Sans" fontStyle="normal" fontSize="5.500" fontWeight="bold" fill="#181458" textLength="33">Government</text>
              <text x="72" y="28" fontFamily="Liberation Sans" fontStyle="normal" fontSize="5.500" fontWeight="bold" fill="#181458" textLength="28">Made Easy</text>
            </svg>
          </div>
          <p className="w-[260px] whitespace-nowrap">US Dept of Commerce<br />National Oceanic and Atmospheric Administration<br />National Weather Service<br />National Centers for Environmental Prediction<br />Aviation Weather Center<br />7220 NW 101st Terr., Room 118<br />Kansas City, MO 64153-2371</p>
          <p className="w-[220px]">Disclaimer<br />Information Quality<br />Glossary<br />About Us<br />Contact AWC</p>
          <p className="tracking-[0.100px]">Privacy Policy<br />Freedom of Information Act (FOIA)<br />Career Opportunities<br />Server: IDP-AWC0</p>
        </footer>
      </div>
    </div>
  );
}
